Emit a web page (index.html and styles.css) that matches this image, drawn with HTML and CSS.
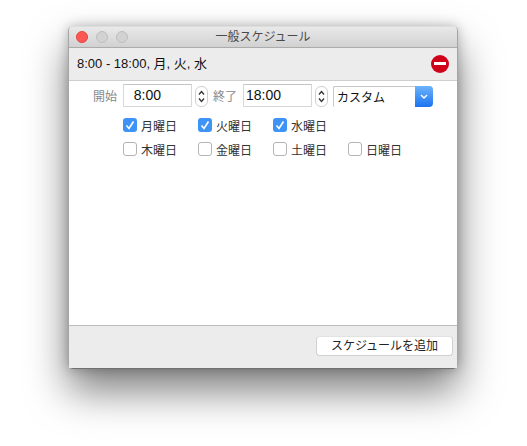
FILE: index.html
```html
<!DOCTYPE html>
<html lang="ja">
<head>
<meta charset="utf-8">
<title>一般スケジュール</title>
<link rel="stylesheet" href="styles.css">
</head>
<body>
<div class="window">
  <div class="titlebar">
    <div class="lights"><span class="light red"></span><span class="light"></span><span class="light"></span></div>
    <div class="title">一般スケジュール</div>
  </div>
  <div class="header">
    <span class="summary">8:00 - 18:00, 月, 火, 水</span>
    <span class="remove"><span class="remove-bar"></span></span>
  </div>
  <div class="content">
    <div class="form-row">
      <span class="label">開始</span>
      <span class="field">8:00</span>
      <span class="stepper"><svg width="11" height="19" viewBox="0 0 11 19"><path d="M3 7.5 5.5 4.5 8 7.5M3 11.5 5.5 14.5 8 11.5" fill="none" stroke="#333" stroke-width="1.3"/></svg></span>
      <span class="label end">終了</span>
      <span class="field">18:00</span>
      <span class="stepper"><svg width="11" height="19" viewBox="0 0 11 19"><path d="M3 7.5 5.5 4.5 8 7.5M3 11.5 5.5 14.5 8 11.5" fill="none" stroke="#333" stroke-width="1.3"/></svg></span>
      <span class="select"><span class="select-text">カスタム</span><span class="select-btn"><svg width="18" height="21" viewBox="0 0 18 21"><path d="M6 9 9 12 12 9" fill="none" stroke="#fff" stroke-width="1.5"/></svg></span></span>
    </div>
    <div class="days">
      <label class="day"><span class="box on"><svg width="14" height="14" viewBox="0 0 14 14"><path d="M3.5 7.5 6 10.5 10.5 3.5" fill="none" stroke="#fff" stroke-width="1.6"/></svg></span>月曜日</label>
      <label class="day"><span class="box on"><svg width="14" height="14" viewBox="0 0 14 14"><path d="M3.5 7.5 6 10.5 10.5 3.5" fill="none" stroke="#fff" stroke-width="1.6"/></svg></span>火曜日</label>
      <label class="day"><span class="box on"><svg width="14" height="14" viewBox="0 0 14 14"><path d="M3.5 7.5 6 10.5 10.5 3.5" fill="none" stroke="#fff" stroke-width="1.6"/></svg></span>水曜日</label>
      <span class="day-gap"></span>
      <label class="day"><span class="box"></span>木曜日</label>
      <label class="day"><span class="box"></span>金曜日</label>
      <label class="day"><span class="box"></span>土曜日</label>
      <label class="day"><span class="box"></span>日曜日</label>
    </div>
  </div>
  <div class="footer">
    <span class="button">スケジュールを追加</span>
  </div>
</div>
</body>
</html>
```
FILE: styles.css
```css
* { box-sizing: border-box; }
html, body { margin: 0; padding: 0; background: #fff; }
body {
  width: 527px;
  height: 446px;
  overflow: hidden;
  padding: 26px 0 0 68px;
  font-family: "Noto Sans CJK JP", "Liberation Sans", sans-serif;
  font-size: 12px;
  color: #222;
}
.window {
  width: 390px;
  height: 343px;
  display: flex;
  flex-direction: column;
  background: #ececec;
  border-radius: 5px;
  border: 1px solid #a5a5a5;
  border-top-color: #ddd;
  border-bottom-color: #707070;
  box-shadow: 0 22px 40px rgba(0, 0, 0, .5), 0 0 12px rgba(0, 0, 0, .25);
}
.titlebar {
  height: 21px;
  flex: none;
  display: flex;
  align-items: center;
  position: relative;
  background: linear-gradient(#e9e9e9, #d1d1d1);
  border-bottom: 1px solid #ababab;
  border-radius: 4px 4px 0 0;
}
.lights { display: flex; gap: 8px; padding-left: 7px; }
.light {
  width: 12px;
  height: 12px;
  border-radius: 50%;
  background: #d2d2d2;
  border: 1px solid #bfbfbf;
}
.light.red { background: #fc5753; border-color: #e5443f; }
.title {
  position: absolute;
  left: 0;
  right: 0;
  top: 0;
  text-align: center;
  font-size: 12px;
  line-height: 18px;
  color: #4a4a4a;
}
.header {
  height: 33px;
  flex: none;
  display: flex;
  align-items: center;
  justify-content: space-between;
  padding: 0 8px 1px 8px;
  background: #ececec;
  border-bottom: 1px solid #cfcfcf;
}
.summary {
  font-family: "Liberation Sans", "Noto Sans CJK JP", sans-serif;
  font-size: 13px;
  line-height: 16px;
  color: #111;
}
.remove {
  width: 18px;
  height: 18px;
  border-radius: 50%;
  background: #d0021b;
  display: flex;
  align-items: center;
  justify-content: center;
}
.remove-bar { width: 12px; height: 3px; background: #fff; }
.content {
  flex: 1;
  background: #fff;
  padding: 3px 0 0 24px;
  border-bottom: 1px solid #bdbdbd;
}
.form-row { display: flex; align-items: center; height: 23px; }
.label { width: 30px; font-size: 12px; color: #888; white-space: nowrap; }
.label.end { width: 24px; margin: 0 6px 0 5px; }
.field {
  width: 69px;
  height: 23px;
  border: 1px solid #d8d8d8;
  border-top-color: #c4c4c4;
  font-family: "Liberation Sans", sans-serif;
  font-size: 14px;
  line-height: 21px;
  text-align: right;
  padding-right: 30px;
  color: #111;
}
.stepper {
  width: 13px;
  height: 21px;
  margin: 1px 0 0 3px;
  border: 1px solid #cfcfcf;
  border-radius: 6px;
  display: flex;
  align-items: center;
  justify-content: center;
  flex: none;
}
.stepper svg { flex: none; }
.select {
  width: 100px;
  height: 21px;
  margin: 1px 0 0 5px;
  display: flex;
  border: 1px solid #c8c8c8;
  border-right: 0;
  border-bottom: 0;
  border-radius: 2px 4px 4px 2px;
}
.select-text { flex: 1; font-size: 12px; line-height: 19px; padding-left: 3px; color: #111; }
.select-btn {
  width: 18px;
  height: 21px;
  margin-top: -1px;
  background: linear-gradient(#6db3fb, #1a73f0);
  border-radius: 0 4px 4px 0;
}
.select-btn svg { display: block; }
.days {
  display: grid;
  grid-template-columns: repeat(4, 75px);
  row-gap: 4px;
  margin: 8px 0 0 30px;
}
.day {
  display: flex;
  align-items: center;
  height: 20px;
  font-size: 12px;
  color: #333;
  white-space: nowrap;
}
.box {
  width: 14px;
  height: 14px;
  margin-right: 4px;
  border: 1px solid #b4b4b4;
  border-radius: 3px;
  background: #fff;
  flex: none;
}
.box.on { border: 0; background: #3d94f6; }
.box svg { display: block; }
.footer {
  height: 42px;
  flex: none;
  display: flex;
  justify-content: flex-end;
  padding: 10px 4px 0 0;
  background: #ececec;
}
.button {
  width: 137px;
  height: 20px;
  background: #fff;
  border: 1px solid #d0d0d0;
  border-top-color: #e2e2e2;
  border-radius: 4px;
  font-size: 12px;
  line-height: 16px;
  text-align: center;
  color: #222;
}
```
